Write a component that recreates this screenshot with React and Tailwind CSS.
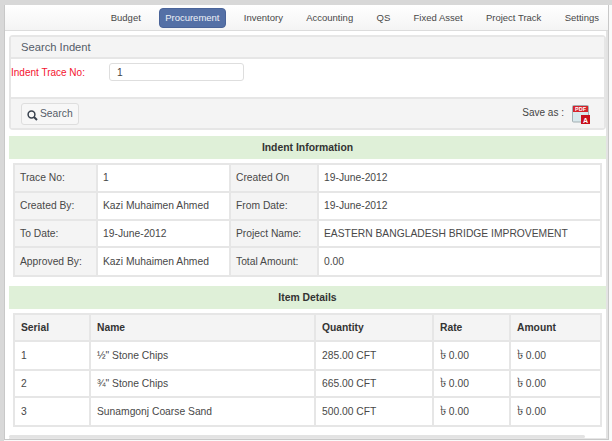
import React from 'react';

const navItems = ['Budget', 'Procurement', 'Inventory', 'Accounting', 'QS', 'Fixed Asset', 'Project Track', 'Settings'];

const infoRows = [
  ['Trace No:', '1', 'Created On', '19-June-2012'],
  ['Created By:', 'Kazi Muhaimen Ahmed', 'From Date:', '19-June-2012'],
  ['To Date:', '19-June-2012', 'Project Name:', 'EASTERN BANGLADESH BRIDGE IMPROVEMENT'],
  ['Approved By:', 'Kazi Muhaimen Ahmed', 'Total Amount:', '0.00'],
];
const infoHeights = ['h-[28px]', 'h-[28px]', 'h-[27px]', 'h-[29px]'];

const items = [
  ['1', '½" Stone Chips', '285.00 CFT'],
  ['2', '¾" Stone Chips', '665.00 CFT'],
  ['3', 'Sunamgonj Coarse Sand', '500.00 CFT'],
];
const itemHeights = ['h-[29px]', 'h-[27px]', 'h-[29px]'];

function PdfIcon() {
  return (
    <svg width="18" height="19" viewBox="0 0 18 19">
      <rect x="0.5" y="0.5" width="16" height="16.5" rx="1" fill="#d8e8ec" stroke="#a3afb2" />
      <rect x="1" y="1" width="15" height="6" fill="#d5232b" />
      <text x="8.5" y="6" textAnchor="middle" fontSize="5.5" fontWeight="700" fill="#fff" fontFamily="Liberation Sans, sans-serif">PDF</text>
      <rect x="9" y="10" width="9" height="9" fill="#c8101c" />
      <text x="13.5" y="17.5" textAnchor="middle" fontSize="7" fontWeight="700" fill="#fff" fontFamily="Liberation Sans, sans-serif">A</text>
    </svg>
  );
}

function SearchIcon() {
  return (
    <svg width="11" height="11" viewBox="0 0 11 11" className="mt-[3px]">
      <circle cx="4.5" cy="4.5" r="3.4" fill="none" stroke="#39424e" strokeWidth="1.5" />
      <path d="M7 7 L10 10" stroke="#39424e" strokeWidth="2" />
    </svg>
  );
}

function GreenBar({ children, className }) {
  return (
    <div className={`h-[23px] bg-[#dff0d8] flex items-center justify-center text-[10.4px] font-bold text-[#333] ${className}`}>
      {children}
    </div>
  );
}

function Taka() {
  return <span className="text-[12.5px] leading-none">৳</span>;
}

export default function App() {
  return (
    <div className="relative w-[612px] h-[441px] overflow-hidden bg-[#fafafa] border-t-[5px] border-l-[4px] border-[#d8d8d8] font-['Liberation_Sans',Arial,sans-serif] text-[10.3px] text-[#484848]">
      {/* top toggle tab */}
      <div className="absolute left-[193px] -top-[5px] w-[39px] h-[5px] bg-[#eeeeee] border-x border-[#bbb] flex justify-center">
        <div className="mt-[1px] w-0 h-0 border-x-[3px] border-x-transparent border-t-[3px] border-t-[#222]" />
      </div>

      <div className="w-[605px] h-[435px] bg-white border-x border-b border-[#c8c8c8] flex flex-col">
        {/* Nav */}
        <nav className="h-[26px] shrink-0 flex items-center justify-end pt-[1px] pr-[9px] gap-[23.3px] bg-gradient-to-b from-white to-[#f4f4f4] border-b border-[#dcdcdc] text-[9.5px] text-[#484848]">
          {navItems.map((item) => (
            <a
              key={item}
              className={
                item === 'Procurement'
                  ? '-mx-[5px] h-5 px-[5px] flex items-center rounded bg-[#5470a6] text-[#eef1f6] border border-[#4a6499]'
                  : 'h-5 flex items-center'
              }
            >
              {item}
            </a>
          ))}
        </nav>

        <div className="flex-1 pl-[4px] pt-[4px] min-h-0 border-r-2 border-[#e3e3e3]">
          {/* Search panel */}
          <section className="h-[95px] border-2 border-[#e6e6e6] rounded flex flex-col">
            <div className="h-[22px] shrink-0 bg-[#f4f4f4] border-b-2 border-[#e6e6e6] pl-[10px] flex items-center text-[11.2px] text-[#555c68]">
              Search Indent
            </div>
            <div className="flex-1 flex items-start pt-[4px]">
              <label className="w-[98px] pt-[2px] text-[#f4142f] text-[10px]">Indent Trace No:</label>
              <div className="w-[135px] h-[18px] border border-[#dedede] rounded-[3px] pl-[7px] flex items-center pt-[1px] text-[#444]">1</div>
            </div>
            <div className="h-[31px] shrink-0 bg-[#f4f4f4] border-t-2 border-[#e6e6e6] pl-[10px] pr-[14px] flex items-center justify-between">
              <button className="h-[22px] w-[58px] pl-[5px] border border-[#dedede] rounded-[3px] flex items-center gap-[2px] bg-[#f7f7f7] text-[#555c68]">
                <SearchIcon />
                <span className="pt-[1px]">Search</span>
              </button>
              <div className="flex items-center gap-[8px] pt-[1px]">
                <span className="text-[#444] text-[10px] pb-[3px]">Save as :</span>
                <PdfIcon />
              </div>
            </div>
          </section>

          {/* Indent info */}
          <GreenBar className="mt-[6px]">Indent Information</GreenBar>
          <div className="px-[4px] pt-[4px]">
            <table className="w-[589px] table-fixed border-collapse border-2 border-[#e6e6e6]">
              <colgroup>
                <col className="w-[83px]" />
                <col className="w-[133px]" />
                <col className="w-[88px]" />
                <col />
              </colgroup>
              <tbody>
                {infoRows.map((row, i) => (
                  <tr key={i} className={infoHeights[i]}>
                    {row.map((cell, j) => (
                      <td
                        key={j}
                        className={`border-2 border-[#e6e6e6] px-[5px] whitespace-nowrap ${j % 2 === 0 ? 'bg-[#f4f4f4]' : 'bg-white'}`}
                      >
                        {cell}
                      </td>
                    ))}
                  </tr>
                ))}
              </tbody>
            </table>
          </div>

          {/* Item details */}
          <GreenBar className="mt-[9px]">Item Details</GreenBar>
          <div className="px-[4px] pt-[4px]">
            <table className="w-[589px] table-fixed border-collapse border-2 border-[#e6e6e6]">
              <colgroup>
                <col className="w-[76px]" />
                <col className="w-[225px]" />
                <col className="w-[118px]" />
                <col className="w-[77px]" />
                <col />
              </colgroup>
              <thead>
                <tr className="h-[27px] bg-[#f4f4f4] text-[#333]">
                  {['Serial', 'Name', 'Quantity', 'Rate', 'Amount'].map((h) => (
                    <th key={h} className="border-2 border-[#e6e6e6] px-[6px] text-left font-bold">
                      {h}
                    </th>
                  ))}
                </tr>
              </thead>
              <tbody>
                {items.map((row, i) => (
                  <tr key={i} className={itemHeights[i]}>
                    {row.map((cell, j) => (
                      <td key={j} className="border-2 border-[#e6e6e6] px-[6px] whitespace-nowrap">
                        {cell}
                      </td>
                    ))}
                    <td className="border-2 border-[#e6e6e6] px-[6px] whitespace-nowrap"><Taka /> 0.00</td>
                    <td className="border-2 border-[#e6e6e6] px-[6px] whitespace-nowrap"><Taka /> 0.00</td>
                  </tr>
                ))}
              </tbody>
            </table>
          </div>

          {/* horizontal scrollbar */}
          <div className="mt-[8px] h-[3px] w-[576px] rounded-full bg-[#e3e3e3]" />
          <div className="h-px bg-[#e6e6e6]" />
        </div>
      </div>

      {/* left toggle handle, over the outer edge */}
      <div className="absolute -left-[4px] top-[198px] w-[4px] h-[38px] bg-[#eeeeee] border-y border-[#bbb]">
        <div className="mt-[10px] w-0 h-0 border-y-[3px] border-y-transparent border-r-[3px] border-r-[#222]" />
      </div>
    </div>
  );
}
